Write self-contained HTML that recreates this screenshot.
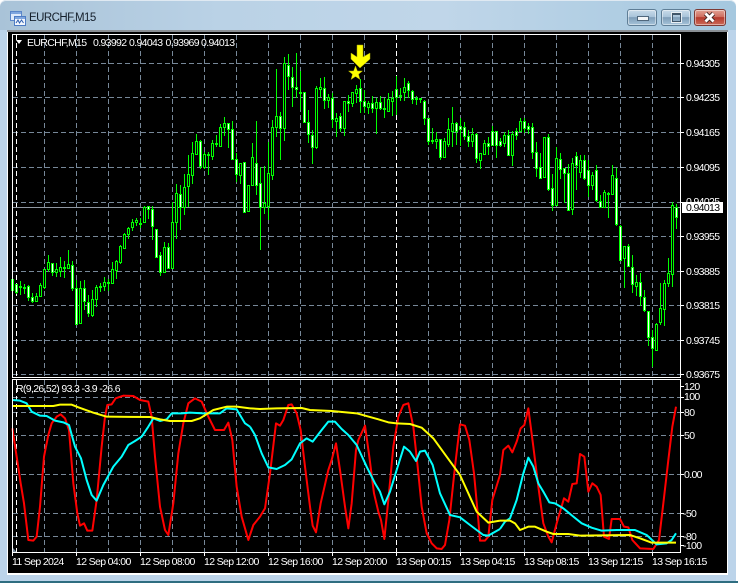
<!DOCTYPE html>
<html>
<head>
<meta charset="utf-8">
<style>
html,body{margin:0;padding:0;width:738px;height:583px;overflow:hidden;background:#fff}
#win{position:absolute;left:0;top:0;width:736px;height:582px;border-radius:6px 6px 0 0;background:linear-gradient(90deg,#a9c3d8 0,#bad2e6 30%,#c0d6e9 60%,#a5c8df 100%);box-shadow:inset 0 1px 0 #dfe9f2}
#strip{position:absolute;left:0;top:30px;width:736px;height:551px;background:#bcd4ea}
#base{position:absolute;left:0;top:581px;width:738px;height:2px;background:#2f6d80}
#frame{position:absolute;left:7px;top:30px;width:721px;height:545px;background:#fff;border-top:2px solid #8a8f94;box-sizing:border-box}
svg#c{position:absolute;left:0;top:0}
.btn{position:absolute;top:9px;height:17px;border-radius:3px;box-sizing:border-box;border:1px solid #5f7e96;box-shadow:inset 0 0 0 1px rgba(255,255,255,.45);background:linear-gradient(#c9dbe9 0,#a9c4da 45%,#7e9db8 50%,#a6c4da 100%)}
#title{position:absolute;left:29px;top:11px;font:11.5px/14px "Liberation Sans",sans-serif;letter-spacing:-.55px;color:#15202c}
text{font-family:"Liberation Sans",sans-serif;font-size:10.5px;letter-spacing:-.65px;fill:#fff}
</style>
</head>
<body>
<div id="win"></div>
<div id="strip"></div>
<div id="base"></div>
<div id="frame"></div>
<svg style="position:absolute;left:10px;top:11px" width="16" height="16" viewBox="0 0 16 16">
<rect x=".5" y=".5" width="11" height="9" fill="#dfeafa" stroke="#5a86c8"/>
<rect x="1" y="1" width="10" height="2" fill="#7fa6de"/>
<rect x="4.5" y="5.5" width="11" height="9" fill="#f2f6fd" stroke="#4d7cc4"/>
<rect x="5" y="6" width="10" height="2" fill="#7fa6de"/>
<path d="M6 12l2-3 1.500 3 2-3 2 3" fill="none" stroke="#2d5fb0"/>
</svg>
<div id="title">EURCHF,M15</div>
<div class="btn" style="left:627px;width:30px"><div style="position:absolute;left:9px;top:7px;width:10px;height:3px;background:#f4f6f8;border:1px solid #50677c;margin-top:-1px"></div></div>
<div class="btn" style="left:661px;width:30px"><div style="position:absolute;left:10px;top:3px;width:7px;height:6px;border:1px solid #40566a;box-shadow:0 0 0 1px #e8eef3;border-top-width:2px"></div></div>
<div class="btn" style="left:694px;width:32px;border-color:#7e3a34;background:linear-gradient(#e2a294 0,#cf6f60 45%,#b53a2c 50%,#cc6a58 100%)"><svg width="30" height="15" style="position:absolute;left:0;top:0"><path d="M10.500 3.500l8 8M18.500 3.500l-8 8" stroke="#3d2320" stroke-width="4.500"/><path d="M10.500 3.500l8 8M18.500 3.500l-8 8" stroke="#fff" stroke-width="2.800"/></svg></div>

<svg id="c" width="738" height="583" viewBox="0 0 738 583">
<rect x="8" y="32" width="719" height="541" fill="#000"/>
<!-- grid -->
<g stroke="#778899" fill="none" stroke-dasharray="5 3" shape-rendering="crispEdges">
<path d="M13 63.500H680M13 97.500H680M13 132.500H680M13 167.500H680M13 202.500H680M13 236.500H680M13 271.500H680M13 305.500H680M13 340.500H680M13 374.500H680"/>
<path d="M13 397.500H680M13 412.500H680M13 435.500H680M13 474.500H680M13 513.500H680M13 536.500H680"/>
<path d="M44.500 35V377M76.500 35V377M108.500 35V377M140.500 35V377M172.500 35V377M204.500 35V377M236.500 35V377M268.500 35V377M300.500 35V377M332.500 35V377M364.500 35V377M428.500 35V377M460.500 35V377M492.500 35V377M524.500 35V377M556.500 35V377M588.500 35V377M620.500 35V377M652.500 35V377"/>
<path d="M44.500 380V552M76.500 380V552M108.500 380V552M140.500 380V552M172.500 380V552M204.500 380V552M236.500 380V552M268.500 380V552M300.500 380V552M332.500 380V552M364.500 380V552M428.500 380V552M460.500 380V552M492.500 380V552M524.500 380V552M556.500 380V552M588.500 380V552M620.500 380V552M652.500 380V552"/>
</g>
<g stroke="#fff" fill="none" stroke-dasharray="5 3" shape-rendering="crispEdges">
<path d="M16.500 35V377M396.500 35V377M16.500 380V552M396.500 380V552"/>
</g>
<path d="M13 207.500H680" stroke="#8f98a3" shape-rendering="crispEdges"/>
<!-- wicks -->
<path shape-rendering="crispEdges" fill="none" stroke="#0f0" d="M12.500 274V292M16.500 284V294M20.500 281V295M24.500 284V294M28.500 285V301M32.500 293V303M36.500 293V301M40.500 283V297M44.500 269V289M48.500 255V272M52.500 263V276M56.500 263V277M60.500 257V277M64.500 261V278M68.500 250V268M72.500 261V291M76.500 280V325M80.500 281V324M84.500 280V310M88.500 295V317M92.500 290V317M96.500 285V307M100.500 283V292M104.500 277V291M108.500 279V291M112.500 262V283M116.500 260V279M120.500 245V264M124.500 233V248M128.500 227V239M132.500 219V231M136.500 218V226M140.500 218V228M144.500 206V223M148.500 206V219M152.500 206V240M156.500 229V258M160.500 252V276M164.500 242V272M168.500 243V269M172.500 202V268M176.500 184V239M180.500 185V230M184.500 174V215M188.500 155V207M192.500 142V184M196.500 134V155M200.500 140V169M204.500 152V169M208.500 152V175M212.500 140V160M216.500 135V147M220.500 124V146M224.500 117V136M228.500 123V148M232.500 121V160M236.500 153V182M240.500 163V184M244.500 162V213M248.500 185V211M252.500 143V186M256.500 121V195M260.500 167V250M264.500 166V214M268.500 142V220M272.500 120V180M276.500 69V137M280.500 112V160M284.500 57V141M288.500 54V90M292.500 67V107M296.500 53V98M300.500 71V110M304.500 92V122M308.500 110V143M312.500 130V164M316.500 86V149M320.500 78V97M324.500 77V109M328.500 94V108M332.500 93V128M336.500 113V137M340.500 113V132M344.500 101V136M348.500 95V112M352.500 92V107M356.500 85V103M360.500 79V113M364.500 90V113M368.500 101V114M372.500 96V113M376.500 98V134M380.500 96V110M384.500 98V118M388.500 93V111M392.500 91V116M396.500 76V115M400.500 88V101M404.500 78V101M408.500 81V98M412.500 90V104M416.500 96V105M420.500 98V103M424.500 100V125M428.500 118V145M432.500 128V144M436.500 132V149M440.500 139V160M444.500 138V157M448.500 118V147M452.500 107V147M456.500 122V145M460.500 118V146M464.500 122V140M468.500 130V147M472.500 128V147M476.500 133V163M480.500 153V169M484.500 140V155M488.500 137V155M492.500 126V145M496.500 131V158M500.500 138V147M504.500 132V147M508.500 130V156M512.500 131V166M516.500 128V140M520.500 118V132M524.500 118V133M528.500 123V134M532.500 123V159M536.500 142V177M540.500 153V179M544.500 137V177M548.500 134V191M552.500 174V211M556.500 147V205M560.500 153V179M564.500 168V203M568.500 164V211M572.500 158V215M576.500 152V190M580.500 155V178M584.500 155V180M588.500 160V197M592.500 172V190M596.500 165V202M600.500 195V208M604.500 190V208M608.500 192V218M612.500 165V195M616.500 168V226M620.500 225V261M624.500 246V288M628.500 244V267M632.500 255V293M636.500 275V296M640.500 273V306M644.500 290V312M648.500 311V346M652.500 330V367M656.500 323V351M660.500 283V325M664.500 280V326M668.500 258V287M672.500 202V287M676.500 204V229"/>
<!-- bodies: bullish (black centre) -->
<path shape-rendering="crispEdges" fill="#000" stroke="#0f0" d="M19.500 286.500h2v1h-2zM23.500 287.500h2v1h-2zM35.500 296.500h2v5h-2zM39.500 285.500h2v11h-2zM43.500 269.500h2v18h-2zM47.500 262.500h2v7h-2zM55.500 269.500h2v3h-2zM59.500 267.500h2v4h-2zM63.500 267.500h2v1h-2zM67.500 264.500h2v4h-2zM79.500 288.500h2v35h-2zM91.500 299.500h2v16h-2zM95.500 287.500h2v12h-2zM99.500 286.500h2v1h-2zM103.500 282.500h2v4h-2zM107.500 282.500h2v1h-2zM111.500 269.500h2v14h-2zM115.500 261.500h2v9h-2zM119.500 246.500h2v16h-2zM123.500 234.500h2v14h-2zM127.500 228.500h2v6h-2zM131.500 222.500h2v5h-2zM135.500 220.500h2v2h-2zM139.500 223.500h2v1h-2zM143.500 207.500h2v15h-2zM163.500 247.500h2v25h-2zM171.500 222.500h2v46h-2zM175.500 193.500h2v29h-2zM183.500 187.500h2v20h-2zM187.500 174.500h2v12h-2zM191.500 153.500h2v22h-2zM195.500 141.500h2v13h-2zM203.500 154.500h2v13h-2zM207.500 154.500h2v1h-2zM211.500 143.500h2v13h-2zM215.500 143.500h2v1h-2zM219.500 127.500h2v19h-2zM223.500 123.500h2v4h-2zM239.500 163.500h2v12h-2zM247.500 185.500h2v26h-2zM251.500 157.500h2v28h-2zM263.500 203.500h2v4h-2zM267.500 173.500h2v33h-2zM271.500 127.500h2v48h-2zM275.500 116.500h2v11h-2zM283.500 63.500h2v65h-2zM299.500 92.500h2v1h-2zM315.500 88.500h2v59h-2zM319.500 87.500h2v2h-2zM327.500 97.500h2v3h-2zM335.500 118.500h2v3h-2zM343.500 101.500h2v27h-2zM351.500 92.500h2v11h-2zM355.500 89.500h2v4h-2zM367.500 103.500h2v4h-2zM375.500 102.500h2v6h-2zM383.500 108.500h2v1h-2zM387.500 99.500h2v12h-2zM391.500 98.500h2v3h-2zM399.500 95.500h2v1h-2zM403.500 87.500h2v5h-2zM415.500 98.500h2v1h-2zM419.500 98.500h2v1h-2zM431.500 140.500h2v1h-2zM435.500 139.500h2v2h-2zM443.500 141.500h2v16h-2zM447.500 129.500h2v15h-2zM451.500 123.500h2v8h-2zM471.500 134.500h2v7h-2zM479.500 153.500h2v7h-2zM483.500 143.500h2v11h-2zM503.500 135.500h2v8h-2zM511.500 134.500h2v21h-2zM519.500 121.500h2v10h-2zM543.500 137.500h2v40h-2zM555.500 158.500h2v47h-2zM571.500 163.500h2v46h-2zM579.500 160.500h2v12h-2zM591.500 175.500h2v10h-2zM603.500 192.500h2v15h-2zM607.500 193.500h2v1h-2zM611.500 175.500h2v19h-2zM623.500 246.500h2v12h-2zM635.500 282.500h2v4h-2zM655.500 324.500h2v26h-2zM659.500 308.500h2v14h-2zM663.500 283.500h2v26h-2zM667.500 273.500h2v10h-2zM671.500 205.500h2v69h-2z"/>
<!-- bodies: bearish (white centre) -->
<path shape-rendering="crispEdges" fill="#fff" stroke="#0f0" d="M11.500 279.500h2v11h-2zM15.500 284.500h2v8h-2zM27.500 286.500h2v11h-2zM31.500 297.500h2v4h-2zM51.500 263.500h2v9h-2zM71.500 265.500h2v23h-2zM75.500 288.500h2v36h-2zM83.500 288.500h2v13h-2zM87.500 302.500h2v11h-2zM147.500 206.500h2v3h-2zM151.500 209.500h2v17h-2zM155.500 229.500h2v28h-2zM159.500 255.500h2v17h-2zM167.500 247.500h2v21h-2zM179.500 194.500h2v13h-2zM199.500 141.500h2v25h-2zM227.500 123.500h2v6h-2zM231.500 129.500h2v30h-2zM235.500 159.500h2v15h-2zM243.500 162.500h2v50h-2zM255.500 163.500h2v22h-2zM259.500 183.500h2v24h-2zM279.500 116.500h2v12h-2zM287.500 65.500h2v11h-2zM291.500 77.500h2v10h-2zM295.500 87.500h2v2h-2zM303.500 92.500h2v30h-2zM307.500 122.500h2v12h-2zM311.500 135.500h2v12h-2zM323.500 88.500h2v12h-2zM331.500 98.500h2v21h-2zM339.500 116.500h2v12h-2zM347.500 101.500h2v2h-2zM359.500 88.500h2v13h-2zM363.500 101.500h2v5h-2zM371.500 103.500h2v5h-2zM379.500 102.500h2v6h-2zM395.500 89.500h2v8h-2zM407.500 83.500h2v7h-2zM411.500 91.500h2v8h-2zM423.500 101.500h2v17h-2zM427.500 118.500h2v23h-2zM439.500 139.500h2v18h-2zM455.500 123.500h2v8h-2zM459.500 126.500h2v3h-2zM463.500 127.500h2v9h-2zM467.500 136.500h2v5h-2zM475.500 134.500h2v24h-2zM487.500 143.500h2v3h-2zM491.500 131.500h2v14h-2zM495.500 131.500h2v14h-2zM499.500 141.500h2v4h-2zM507.500 135.500h2v20h-2zM515.500 131.500h2v4h-2zM523.500 121.500h2v7h-2zM527.500 126.500h2v3h-2zM531.500 127.500h2v25h-2zM535.500 152.500h2v16h-2zM539.500 167.500h2v11h-2zM547.500 137.500h2v52h-2zM551.500 188.500h2v17h-2zM559.500 159.500h2v10h-2zM563.500 168.500h2v5h-2zM567.500 173.500h2v37h-2zM575.500 156.500h2v9h-2zM583.500 160.500h2v18h-2zM587.500 170.500h2v15h-2zM595.500 170.500h2v30h-2zM599.500 201.500h2v6h-2zM615.500 178.500h2v46h-2zM619.500 226.500h2v34h-2zM627.500 246.500h2v20h-2zM631.500 267.500h2v17h-2zM639.500 282.500h2v14h-2zM643.500 297.500h2v13h-2zM647.500 311.500h2v26h-2zM651.500 337.500h2v11h-2zM675.500 207.500h2v10h-2z"/>
<!-- arrow & star -->
<path d="M357 45h6v12l7-4v6l-10 9-9-9v-6l6 4z" fill="#ff0" stroke="#a8a800" stroke-width=".5"/>
<path d="M355.500 66l1.900 5h5.100l-4 3.200 1.500 5.300-4.500-3-4.500 3 1.500-5.300-4-3.200h5.100z" fill="#ff0" stroke="#a8a800" stroke-width=".5"/>
<!-- indicator -->
<g fill="none" stroke-width="6" stroke-linejoin="round">
<g stroke="#f00">
<polyline transform="translate(0 360) scale(.33333)" points="37,205 50,290 62,370 72,430 85,540 100,542 110,530 120,440 132,290 145,225 155,190 170,170 182,163 195,175 207,210 220,370 232,460 240,497 252,490 262,512 277,512 290,420 305,260 315,170 322,135 335,133 347,115 370,107 400,108 420,120 445,125 455,170 465,290 480,440 495,510 505,525 520,430 535,280 550,190 565,130 585,115 605,125 625,170 645,210 672,210 685,188 697,240 710,380 725,470 745,540 750,525"/>
<polyline transform="translate(250 360) scale(.33333)" points="0,525 10,495 30,470 45,445 60,340 78,190 90,197 100,180 115,135 125,133 140,160 152,210 165,320 180,440 188,497 198,517 212,430 235,330 245,300 258,250 270,330 285,440 295,505 305,430 318,270 325,240 345,197 358,290 372,400 385,455 393,480 403,537 415,420 430,260 445,170 460,135 475,130 490,200 503,320 515,440 530,520 545,550 560,565 575,567 585,555 598,480 615,320 630,193 645,197 658,240 672,340 685,480 690,542 705,542 715,530 727,420 750,345"/>
<polyline transform="translate(500 360) scale(.33333)" points="0,345 10,270 25,257 37,277 50,245 62,205 73,195 85,145 100,260 115,380 130,490 145,530 155,547 170,490 192,415 205,425 217,372 230,370 240,282 253,290 265,395 277,370 290,380 302,405 312,530 327,537 335,477 360,477 372,500 385,502 397,540 420,565 460,567 477,540 490,430 505,300 517,200 528,140"/>
</g>
<g stroke="#0ff">
<polyline transform="translate(0 360) scale(.33333)" points="37,120 60,122 80,130 95,155 120,167 140,168 165,182 190,187 207,195 225,260 243,295 260,360 275,405 290,422 310,375 340,320 365,290 385,255 405,243 425,230 445,200 460,175 480,183 500,178 515,160 545,160 570,158 610,160 660,160 680,145 710,148 735,190 750,200"/>
<polyline transform="translate(250 360) scale(.33333)" points="0,200 15,225 35,280 55,322 80,327 105,315 125,298 150,250 170,235 188,245 215,210 235,185 255,185 275,207 295,225 320,255 350,320 375,370 390,395 403,433 420,395 440,330 462,260 480,275 498,303 510,275 525,272 548,315 570,400 600,465 630,472 660,495 700,525 715,527 750,507"/>
<polyline transform="translate(500 360) scale(.33333)" points="0,507 15,485 30,475 50,420 70,340 85,293 100,320 115,370 130,395 148,427 165,430 190,445 220,470 245,490 275,503 305,512 350,510 405,510 440,525 470,553 500,550 515,540 528,520"/>
</g>
<g stroke="#ff0">
<polyline transform="translate(0 360) scale(.33333)" points="37,138 160,138 180,134 215,134 235,142 280,158 320,170 450,171 480,178 510,183 575,183 600,175 640,150 680,140 710,140 750,145"/>
<polyline transform="translate(250 360) scale(.33333)" points="0,145 30,147 80,145 155,144 180,150 245,153 320,160 385,178 415,187 440,190 480,192 515,203 550,235 590,290 630,345 680,455 715,488 750,482"/>
<polyline transform="translate(500 360) scale(.33333)" points="0,482 30,482 45,490 60,510 85,500 105,500 140,515 160,522 205,522 240,527 390,525 420,535 455,548 528,548"/>
</g>
</g>
<!-- frames -->
<g fill="none" stroke="#fff" shape-rendering="crispEdges">
<path d="M12.500 34.500H680.500V377.500H12.500Z"/>
<path d="M12.500 379.500H680.500V552.500H12.500Z"/>
<path d="M681 63.500h3M681 97.500h3M681 132.500h3M681 167.500h3M681 202.500h3M681 236.500h3M681 271.500h3M681 305.500h3M681 340.500h3M681 374.500h3"/>
<path d="M681 386.500h3M681 397.500h3M681 412.500h3M681 435.500h3M681 474.500h3M681 513.500h3M681 536.500h3M681 545.500h3"/>
<path d="M12.500 553v3M76.500 553v3M140.500 553v3M204.500 553v3M268.500 553v3M332.500 553v3M396.500 553v3M460.500 553v3M524.500 553v3M588.500 553v3M652.500 553v3"/>
</g>
<path d="M13 548l3.500 4H13z" fill="#778899"/>
<path d="M16 40h6l-3 4z" fill="#fff"/>
<!-- labels -->
<text x="27" y="46">EURCHF,M15</text>
<text x="93" y="46">0.93992</text>
<text x="129" y="46">0.94043</text>
<text x="165.500" y="46">0.93969</text>
<text x="201" y="46">0.94013</text>
<text x="16" y="392">R(9,26,52) 93.3 -3.9 -26.6</text>
<text x="686" y="67">0.94305</text>
<text x="686" y="101">0.94235</text>
<text x="686" y="136">0.94165</text>
<text x="686" y="171">0.94095</text>
<text x="686" y="205">0.94025</text>
<text x="686" y="240">0.93955</text>
<text x="686" y="275">0.93885</text>
<text x="686" y="309">0.93815</text>
<text x="686" y="344">0.93745</text>
<text x="686" y="378">0.93675</text>
<rect x="682" y="202" width="41" height="11" fill="#fff"/>
<text x="686" y="211" style="fill:#000">0.94013</text>
<text x="684" y="390">120</text>
<text x="684" y="400">100</text>
<text x="684" y="416">80</text>
<text x="684" y="439">50</text>
<text x="684" y="478">0.00</text>
<text x="683" y="517">-50</text>
<text x="683" y="540">-80</text>
<text x="683" y="549">-100</text>
<text x="12" y="565">11 Sep 2024</text>
<text x="76" y="565">12 Sep 04:00</text>
<text x="140" y="565">12 Sep 08:00</text>
<text x="204" y="565">12 Sep 12:00</text>
<text x="268" y="565">12 Sep 16:00</text>
<text x="332" y="565">12 Sep 20:00</text>
<text x="396" y="565">13 Sep 00:15</text>
<text x="460" y="565">13 Sep 04:15</text>
<text x="524" y="565">13 Sep 08:15</text>
<text x="588" y="565">13 Sep 12:15</text>
<text x="652" y="565">13 Sep 16:15</text>
</svg>
</body>
</html>
